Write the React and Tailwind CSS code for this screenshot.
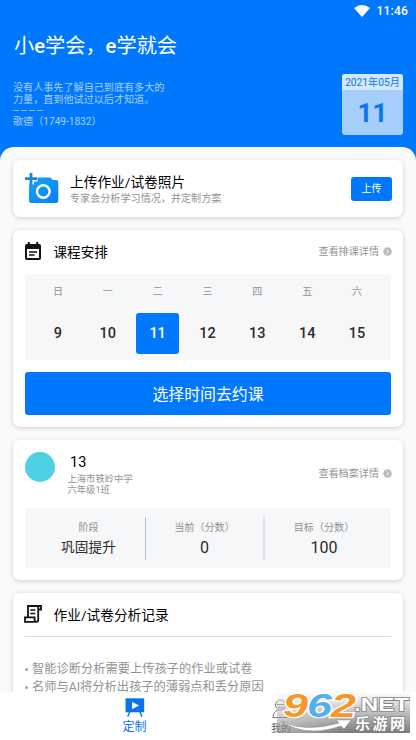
import React, { useState } from 'react';

const days = [
    { week: '日', date: 9 },
    { week: '一', date: 10 },
    { week: '二', date: 11 },
    { week: '三', date: 12 },
    { week: '四', date: 13 },
    { week: '五', date: 14 },
    { week: '六', date: 15 },
];

const Card = ({ className = '', children }) => (
    <section className={`mx-[13px] shrink-0 rounded-[7px] bg-white px-3 shadow-[0_1px_5px_rgba(0,0,0,0.18)] ${className}`}>
        {children}
    </section>
);

const DetailLink = ({ children }) => (
    <a className="flex items-center gap-1 text-[10.1px] leading-3 text-[#929292]">
        {children}
        <svg className="-mr-px -mt-[2px] h-[9px] w-[9px]" viewBox="0 0 18 18">
            <circle cx="9" cy="9" r="8.5" fill="#bcbcbc" />
            <path d="M7 5l4 4-4 4" fill="none" stroke="#fff" strokeWidth="2" />
        </svg>
    </a>
);

const CameraIcon = () => (
    <svg className="h-[31px] w-[35px]" viewBox="0 0 35 31">
        <defs>
            <linearGradient id="camera" x1="0" y1="0" x2="1" y2="1">
                <stop offset="0" stopColor="#12a9f8" />
                <stop offset="1" stopColor="#087cf6" />
            </linearGradient>
        </defs>
        <path d="M12.5 4.5h12.7L28 7h3q2.3 0 2.3 2.3v18.4q0 2.3-2.3 2.3H6.3Q4 30 4 27.7V11.5h5v-3h3.5z" fill="url(#camera)" />
        <circle cx="18.3" cy="18.5" r="6.3" fill="none" stroke="#fff" strokeWidth="2.4" />
        <path d="M6 0v12M0 5.7h12" stroke="#1389dc" strokeWidth="2.8" />
    </svg>
);

const CalendarIcon = () => (
    <svg className="-mt-[2px] h-[18px] w-4" viewBox="0 0 16 18">
        <path d="M1.8 2h12.4Q16 2 16 3.8v12.4q0 1.8-1.8 1.8H1.8Q0 18 0 16.2V3.8Q0 2 1.8 2zM2 7v9h12V7z" fill="#111" fillRule="evenodd" />
        <path d="M3.8 0v4M12.2 0v4" stroke="#111" strokeWidth="2" />
        <path d="M4 10h8M4 13h5.5" stroke="#111" strokeWidth="1.5" />
    </svg>
);

const RecordIcon = () => (
    <svg className="-ml-px -mt-px h-[18px] w-[18px]" viewBox="0 0 18 18" fill="none" stroke="#111" strokeWidth="1.8">
        <path d="M4 12V1h13v3.5h-2.8M14.2 1v14q0 1.8-1.8 1.8H1V12.3h9.6v2.6q0 1.8 1.8 1.8" />
        <path d="M6.3 5h5M6.3 8.4h5" strokeWidth="1.5" />
    </svg>
);

const BoardIcon = () => (
    <svg className="h-[19px] w-5" viewBox="0 0 20 19">
        <path d="M0.5 0.3h18.7v14H0.5z" fill="#0b74ea" />
        <path d="M7 3.7l7 3.8-7 3.8z" fill="#fff" />
        <path d="M4.7 14l-2 4.6M15 14l2 4.6" stroke="#0b74ea" strokeWidth="1.4" />
    </svg>
);

const UserIcon = () => (
    <svg className="-ml-px h-[19px] w-[17px]" viewBox="0 0 17 19" fill="none" stroke="#777" strokeWidth="1">
        <circle cx="8.5" cy="6" r="5" />
        <path d="M4.5 5.5h8M6 8q2.5 2 5 0M1 18.5q0-5.5 5-7.5M16 18.5q0-5.5-5-7.5M0.5 18.5h16" />
    </svg>
);

const Watermark = () => (
    <svg className="absolute bottom-[4px] left-[276px] h-[56px] w-[138px]" viewBox="0 0 138 56">
        <defs>
            <linearGradient id="mark" x1="0" y1="0" x2="0" y2="1">
                <stop offset="0" stopColor="#000" stopOpacity="0" />
                <stop offset="0.5" stopColor="#000" stopOpacity="0.25" />
                <stop offset="1" stopColor="#000" stopOpacity="0.52" />
            </linearGradient>
            <linearGradient id="fade" x1="0" y1="0" x2="1" y2="0">
                <stop offset="0" stopColor="#fff" stopOpacity="0.4" />
                <stop offset="0.5" stopColor="#fff" stopOpacity="0" />
            </linearGradient>
        </defs>
        <path d="M1 12h133v41H1z" fill="url(#mark)" />
        <path d="M1 12h133v41H1z" fill="url(#fade)" />
        <path d="M5 41q24 12 58 2l-3-3 15 0-7 9-3-3Q29 58 5 41z" fill="#fff" stroke="#8c8c8c" strokeWidth="0.5" />
        <g fontFamily="Liberation Sans, sans-serif" fontWeight="bold" fontStyle="italic" fontSize="34" stroke="#fff" strokeWidth="2.5" paintOrder="stroke">
            <text x="7" y="37" textLength="25" lengthAdjust="spacingAndGlyphs" fill="#f7962a">9</text>
            <text x="31" y="37" textLength="25" lengthAdjust="spacingAndGlyphs" fill="#55b0e8">6</text>
            <text x="55" y="37" textLength="25" lengthAdjust="spacingAndGlyphs" fill="#f7962a">2</text>
        </g>
        <g fill="#fff" stroke="#858585" strokeWidth="1.6" paintOrder="stroke" fontWeight="bold">
            <text x="78" y="31" fontFamily="Liberation Sans, sans-serif" fontSize="19" textLength="55" lengthAdjust="spacingAndGlyphs">.NET</text>
            <text x="79" y="49" fontFamily="Noto Sans CJK SC, sans-serif" fontSize="15" textLength="50">乐游网</text>
        </g>
    </svg>
);

const Header = () => (
    <header className="h-[147px] shrink-0 text-white">
        <div className="flex h-5 items-center justify-end gap-[7px] pr-2 pt-[2px]">
            <svg className="-mt-px h-3 w-4" viewBox="0 0 16 12">
                <path d="M0 3Q8-3 16 3L8 12z" fill="#fff" />
            </svg>
            <span className="text-[12px] font-medium leading-4 tracking-[0.2px]">11:46</span>
        </div>
        <h1 className="mt-[11px] pl-[14px] text-[20.2px] leading-[30px]">
            小<b className="font-medium">e</b>学会，<b className="font-medium">e</b>学就会
        </h1>
        <div className="flex justify-between pl-[13px] pr-[13px] pt-[12px]">
            <div className="pt-[9px] text-[10.1px] leading-[11.5px] text-[#a9d0ff]">
                <p>没有人事先了解自己到底有多大的</p>
                <p>力量，直到他试过以后才知道。</p>
                <div className="flex h-[11px] items-center gap-[2px]">
                    <i className="h-px w-[6px] bg-[#80bbff]" />
                    <i className="h-px w-[6px] bg-[#80bbff]" />
                    <i className="h-px w-[6px] bg-[#80bbff]" />
                    <i className="h-px w-[6px] bg-[#80bbff]" />
                </div>
                <p>歌德（1749-1832）</p>
            </div>
            <div className="mt-px h-[61px] w-[61px] overflow-hidden rounded-[3px] bg-[#a5cefb] text-center text-[#0b74e8]">
                <div className="h-4 bg-[#d3e8ff] text-[10.2px] leading-[18px]">2021年05月</div>
                <div className="text-[26px] font-bold leading-[47px]">11</div>
            </div>
        </div>
    </header>
);

const App = () => {
    const [selected, setSelected] = useState(11);

    return (
        <div className="relative flex h-[740px] w-[416px] flex-col overflow-hidden whitespace-nowrap bg-[#0078fe] font-['Roboto','Noto_Sans_CJK_SC',sans-serif]">
            <Header />

            <main className="flex min-h-0 flex-1 flex-col gap-[13px] overflow-hidden rounded-t-[14px] bg-[#fafafa] pt-[13px]">
                <Card className="flex h-[57px] items-center">
                    <CameraIcon />
                    <div className="ml-[10px] flex-1 pt-[2px]">
                        <h2 className="text-[13.7px] leading-[19px] text-black">上传作业/试卷照片</h2>
                        <p className="text-[10.1px] leading-[14px] text-[#929292]">专家会分析学习情况，并定制方案</p>
                    </div>
                    <button className="-mr-px h-6 w-[41px] rounded-[3px] bg-[#0078fe] text-[10px] text-white">上传</button>
                </Card>

                <Card className="h-[197px]">
                    <div className="flex h-11 items-center">
                        <CalendarIcon />
                        <h2 className="-mt-px ml-[12.5px] flex-1 text-[13.6px] leading-5 text-black">课程安排</h2>
                        <DetailLink>查看排课详情</DetailLink>
                    </div>
                    <div className="grid h-[86px] grid-cols-7 bg-[#f6f7f9] pl-2 pr-[9px] text-center">
                        {days.map(day => (
                            <div key={day.date} className="flex flex-col items-center">
                                <span className="h-[39px] text-[10px] leading-[36px] text-[#929292]">{day.week}</span>
                                <button
                                    onClick={() => setSelected(day.date)}
                                    className={`h-[41px] w-[43px] rounded-[3px] text-[14.5px] font-medium ${
                                        day.date === selected ? 'bg-[#0078fe] text-white' : 'bg-[#f7f7f7] text-[#2b2b2b]'
                                    }`}
                                >
                                    {day.date}
                                </button>
                            </div>
                        ))}
                    </div>
                    <button className="mt-3 h-[43px] w-full rounded-[3px] bg-[#0078fe] text-[15.9px] leading-[45px] text-white">
                        选择时间去约课
                    </button>
                </Card>

                <Card className="h-[140px] pt-3">
                    <div className="flex h-14 items-start">
                        <div className="h-[30px] w-[30px] rounded-full bg-[#4dd0e1]" />
                        <div className="ml-[12.5px] flex-1 pt-px text-[9.3px] leading-[11px] text-[#929292]">
                            <h2 className="pl-[2.5px] text-[14.5px] leading-5 text-black">13</h2>
                            <p>上海市铁岭中学</p>
                            <p>六年级1班</p>
                        </div>
                        <div className="pt-4">
                            <DetailLink>查看档案详情</DetailLink>
                        </div>
                    </div>
                    <div className="flex h-[60px] items-center bg-[#f6f7f9] text-center text-[#2b2b2b]">
                        <div className="h-[43px] w-[121px] border-r border-[#b9bfd0] pl-[7px]">
                            <p className="text-[10.1px] leading-[22px] text-[#929292]">阶段</p>
                            <p className="text-[13.7px] leading-[17px]">巩固提升</p>
                        </div>
                        <div className="h-[43px] w-[119px] border-r-2 border-[#e0e2e6]">
                            <p className="text-[10.1px] leading-[22px] text-[#929292]">当前（分数）</p>
                            <p className="text-[16px] leading-[18px]">0</p>
                        </div>
                        <div className="h-[43px] w-[118px]">
                            <p className="text-[10.1px] leading-[22px] text-[#929292]">目标（分数）</p>
                            <p className="text-[16px] leading-[18px]">100</p>
                        </div>
                    </div>
                </Card>

                <Card className="h-[180px]">
                    <div className="flex h-11 items-center border-b border-[#dedede]">
                        <RecordIcon />
                        <h2 className="ml-[11.5px] text-[13.7px] leading-5 text-black">作业/试卷分析记录</h2>
                    </div>
                    <ul className="pt-[23px] text-[12.25px] leading-[18px] text-[#929292]">
                        <li className="flex items-center gap-[4px]"><i className="h-[3px] w-[3px] rounded-full bg-[#a0a0a0]" />智能诊断分析需要上传孩子的作业或试卷</li>
                        <li className="flex items-center gap-[4px]"><i className="h-[3px] w-[3px] rounded-full bg-[#a0a0a0]" />名师与AI将分析出孩子的薄弱点和丢分原因</li>
                    </ul>
                </Card>
            </main>

            <nav className="z-10 flex h-12 shrink-0 bg-white">
                <div className="flex w-[269px] flex-col items-center pt-[6px] text-[12px] leading-[20px] text-[#0b74ea]">
                    <BoardIcon />
                    定制
                </div>
                <div className="flex w-6 flex-col items-center pt-[7px] text-[10px] leading-[22px] text-[#555]">
                    <UserIcon />
                    我的
                </div>
                <Watermark />
            </nav>
        </div>
    );
};

export default App;
